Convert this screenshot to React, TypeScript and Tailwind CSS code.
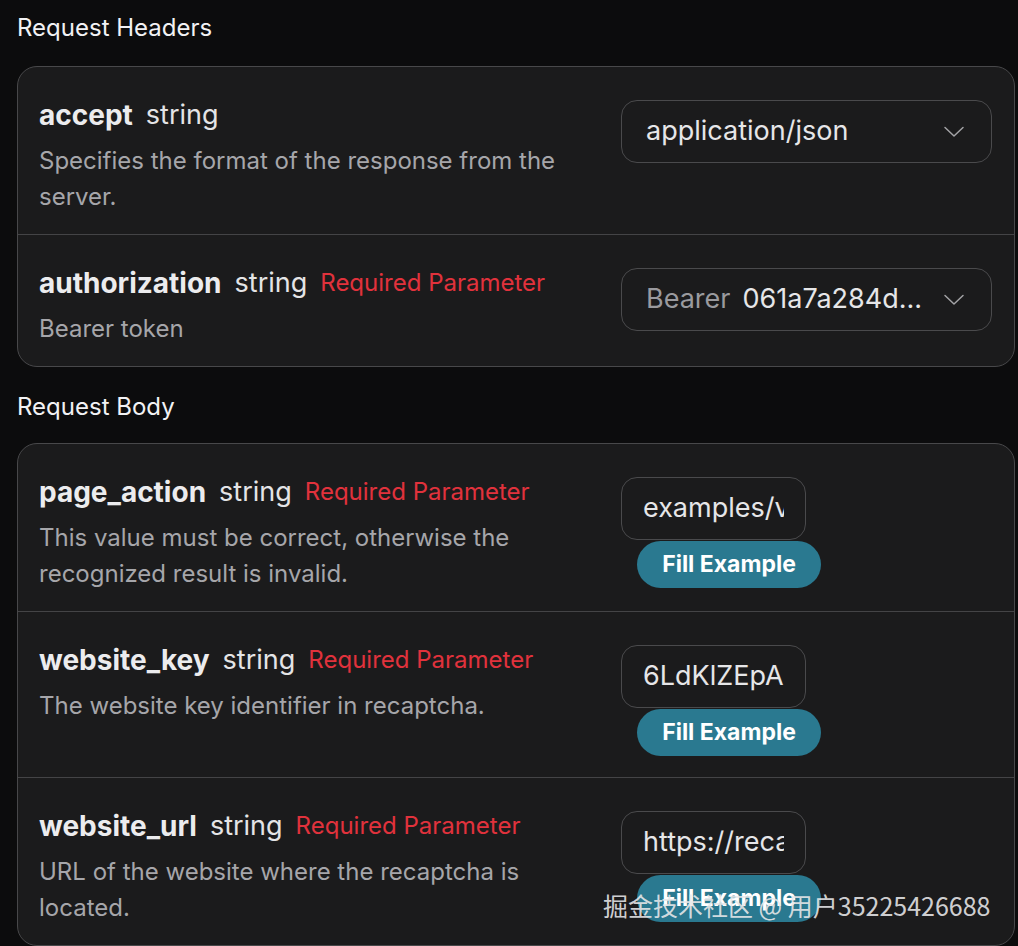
import type { ReactNode } from 'react';

function Chevron() {
  return (
    <svg width="22" height="12" viewBox="0 0 22 12" fill="none" className="shrink-0">
      <path d="M2 1.5 L11 10 L20 1.5" stroke="#a3a3a6" strokeWidth="1.5" strokeLinecap="round" strokeLinejoin="round" />
    </svg>
  );
}

function Title({ name, required }: { name: string; required?: boolean }) {
  return (
    <div className="flex h-8 items-center gap-[13px] whitespace-nowrap">
      <span className="text-[28px] font-bold text-[#ececee]">{name}</span>
      <span className="text-[27px] text-[#e4e4e6]">string</span>
      {required && <span className="text-[24px] text-[#e1323c]">Required Parameter</span>}
    </div>
  );
}

function Row({ name, required, desc, control, divider }: { name: string; required?: boolean; desc: string; control: ReactNode; divider?: boolean }) {
  return (
    <div className={`flex items-start pb-[19px] pl-[21px] pr-[22px] pt-8 ${divider ? 'border-b border-[#444446]' : ''}`}>
      <div className="min-w-0 flex-1 pr-6">
        <Title name={name} required={required} />
        <p className="mt-3 text-[24px] leading-[36px] text-[#a6a6aa]">{desc}</p>
      </div>
      <div className="w-[371px] shrink-0">{control}</div>
    </div>
  );
}

function SelectBox({ children }: { children: ReactNode }) {
  return (
    <div className="mt-px flex h-[63px] items-center justify-between rounded-[16px] border border-[#4a4a4c] pl-6 pr-[26px] text-[27px] text-[#e6e6e8]">
      <div className="flex min-w-0 items-center gap-3 whitespace-nowrap">{children}</div>
      <Chevron />
    </div>
  );
}

function TextInput({ value }: { value: string }) {
  return (
    <div className="mb-[2px]">
      <div className="mt-px flex h-[63px] w-[185px] items-center overflow-hidden rounded-[16px] border border-[#4a4a4c] px-[21px]">
        <span className="block overflow-hidden whitespace-nowrap text-[27px] text-[#e6e6e8]">{value}</span>
      </div>
      <button className="ml-4 mt-px flex h-[47px] w-[184px] items-center justify-center rounded-full bg-[#2a7990] text-[23px] font-bold text-white">
        Fill Example
      </button>
    </div>
  );
}

export default function App() {
  return (
    <div
      className="relative min-h-[946px] w-[1018px] overflow-hidden bg-[#0c0c0d] pl-[17px] pr-[3px] pt-3"
      style={{ fontFamily: 'Inter, "Noto Sans CJK SC", sans-serif' }}
    >
      <h2 className="mb-[22px] text-[24px] leading-8 text-[#f2f2f4]">Request Headers</h2>
      <div className="rounded-[20px] border border-[#48484a] bg-[#1b1b1c]">
        <Row
          name="accept"
          desc="Specifies the format of the response from the server."
          divider
          control={
            <SelectBox>
              <span>application/json</span>
            </SelectBox>
          }
        />
        <Row
          name="authorization"
          required
          desc="Bearer token"
          control={
            <SelectBox>
              <span className="text-[#9a9a9e]">Bearer</span>
              <span className="truncate">061a7a284d...</span>
            </SelectBox>
          }
        />
      </div>

      <h2 className="mb-5 mt-6 text-[24px] leading-8 text-[#f2f2f4]">Request Body</h2>
      <div className="rounded-[20px] border border-[#48484a] bg-[#1b1b1c]">
        <Row
          name="page_action"
          required
          desc="This value must be correct, otherwise the recognized result is invalid."
          divider
          control={<TextInput value="examples/v2/enterprise" />}
        />
        <Row
          name="website_key"
          required
          desc="The website key identifier in recaptcha."
          divider
          control={<TextInput value="6LdKlZEpAAAAAAOQjzC2v_d36tWxCl6dWsozdSy9" />}
        />
        <Row
          name="website_url"
          required
          desc="URL of the website where the recaptcha is located."
          control={<TextInput value="https://recaptcha-demo.appspot.com" />}
        />
      </div>

      <div
        className="absolute left-[603px] top-[889px] whitespace-nowrap text-[25px] leading-8 text-[#e8e8ea]/90"
        style={{ fontFamily: '"Noto Sans CJK SC", sans-serif' }}
      >
        掘金技术社区 @ 用户35225426688
      </div>
    </div>
  );
}
